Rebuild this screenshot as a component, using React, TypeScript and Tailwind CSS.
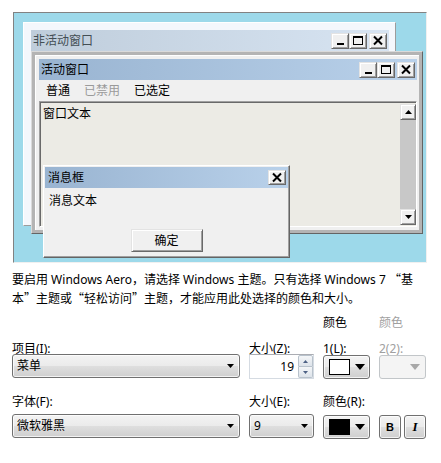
import React from 'react';

type Kind = 'min' | 'max' | 'close';

const aero =
  'rounded-[3px] border border-[#707070] bg-[linear-gradient(#f3f3f3_0%,#ebebeb_48%,#dedede_52%,#cfcfcf_100%)] shadow-[inset_0_0_0_1px_rgba(255,255,255,0.75)]';

const raised =
  'bg-[#f0f0f0] border border-t-[#e3e3e3] border-l-[#e3e3e3] border-r-[#696969] border-b-[#696969] shadow-[inset_1px_1px_0_#ffffff,inset_-1px_-1px_0_#a0a0a0]';

function CaptionGlyph({ kind }: { kind: Kind }) {
  if (kind === 'min')
    return (
      <svg width="12" height="11" viewBox="0 0 12 11">
        <rect x="3" y="8" width="7" height="2" fill="#000" />
      </svg>
    );
  if (kind === 'max')
    return (
      <svg width="12" height="11" viewBox="0 0 12 11">
        <rect x="1.5" y="1.5" width="9" height="8" fill="none" stroke="#000" />
        <rect x="1" y="1" width="10" height="2" fill="#000" />
      </svg>
    );
  return (
    <svg width="12" height="11" viewBox="0 0 12 11">
      <path d="M2 1.5 L10 9.5 M10 1.5 L2 9.5" stroke="#000" strokeWidth="2" />
    </svg>
  );
}

function CaptionButton({ kind, tall = 'h-[16px]' }: { kind: Kind; tall?: string }) {
  return (
    <div className={`w-[18px] ${tall} flex items-center justify-center ${raised}`}>
      <CaptionGlyph kind={kind} />
    </div>
  );
}

function TitleBar({ title, active }: { title: string; active: boolean }) {
  return (
    <div
      className={`h-[21px] flex items-center pl-[2px] pr-[2px] ${
        active
          ? 'bg-[linear-gradient(to_right,#99b4d1,#b9d1ea)] text-black'
          : 'bg-[linear-gradient(to_right,#bfcddb,#d7e4f2)] text-[#434e54]'
      }`}
    >
      <span className="flex-1 leading-[16px]">{title}</span>
      <CaptionButton kind="min" />
      <CaptionButton kind="max" />
      <div className="w-[2px]" />
      <CaptionButton kind="close" />
    </div>
  );
}

function ScrollArrow({ up }: { up?: boolean }) {
  return (
    <div className={`w-[16px] h-[16px] flex items-center justify-center ${raised}`}>
      <svg width="7" height="4" viewBox="0 0 7 4">
        <path d={up ? 'M0 4h7L3.5 0z' : 'M0 0h7L3.5 4z'} fill="#000" />
      </svg>
    </div>
  );
}

function DropArrow({ big, color = '#000' }: { big?: boolean; color?: string }) {
  return big ? (
    <svg width="10" height="6" viewBox="0 0 10 6">
      <path d="M0 0h10L5 6z" fill={color} />
    </svg>
  ) : (
    <svg width="7" height="4" viewBox="0 0 7 4">
      <path d="M0 0h7L3.5 4z" fill={color} />
    </svg>
  );
}

function Combo({ value, width }: { value: string; width: string }) {
  return (
    <div className={`${aero} ${width} h-[24px] flex items-center pl-[4px] pr-[5px]`}>
      <span className="flex-1 leading-[16px]">{value}</span>
      <DropArrow />
    </div>
  );
}

function ColorButton({ swatch }: { swatch: string }) {
  return (
    <div className={`${aero} w-[47px] h-[24px] flex items-center pl-[5px] pr-[4px]`}>
      <div className={`w-[21px] h-[16px] border border-black ${swatch}`} />
      <div className="flex-1" />
      <DropArrow big />
    </div>
  );
}

// full-width CJK quotes
const Q = ({ c }: { c: string }) => <span className="font-['Noto_Sans_CJK_SC',sans-serif]">{c}</span>;

export default function App() {
  return (
    <div className="w-[441px] h-[463px] overflow-hidden bg-white text-[12px] text-black font-['Noto_Sans','Noto_Sans_CJK_SC',sans-serif]">
      {/* preview */}
      <div className="relative ml-[13px] mt-[12px] w-[414px] h-[251px] border border-t-[#828282] border-l-[#828282] border-r-[#f0f0f0] border-b-[#f0f0f0] bg-[#9dd9ea]">
        {/* inactive window */}
        <div className="absolute left-[9px] top-[9px] w-[373px] h-[204px] border border-t-white border-l-white border-r-[#9c9c9c] border-b-[#9c9c9c] bg-[#f4f7fc] pt-[7px] pl-[7px] pr-[6px]">
          <TitleBar title="非活动窗口" active={false} />
        </div>

        {/* active window */}
        <div className="absolute left-[17px] top-[38px] w-[392px] h-[183px] flex border border-t-[#dadada] border-l-[#dadada] border-r-[#646464] border-b-[#646464] bg-[#b4b4b4] p-[3px]">
          <div className="flex-1 flex flex-col border-t border-l border-white bg-[#f0f0f0] pt-[3px] pl-[3px] pr-[2px] pb-[3px]">
            <TitleBar title="活动窗口" active />
            <div className="h-[21px] flex items-center bg-[#f0f0f0]">
              <span className="px-[7px] leading-[16px]">普通</span>
              <span className="px-[7px] leading-[16px] text-[#9a9a9a]">已禁用</span>
              <span className="px-[7px] leading-[16px]">已选定</span>
            </div>
            <div className="flex-1 flex border border-t-[#a0a0a0] border-l-[#a0a0a0] border-r-white border-b-white shadow-[inset_1px_1px_0_#696969] bg-[#ecebe5] pt-[1px] pl-[1px]">
              <div className="flex-1 pl-[2px] pt-[3px] leading-[16px]">窗口文本</div>
              <div className="w-[16px] flex flex-col bg-[#c8c8c8] mt-[1px] mb-[1px]">
                <ScrollArrow up />
                <div className="flex-1" />
                <ScrollArrow />
              </div>
            </div>
          </div>
        </div>

        {/* message box */}
        <div className="absolute left-[29px] top-[152px] w-[247px] h-[93px] flex flex-col border border-t-white border-l-white border-r-[#646464] border-b-[#646464] bg-[#f0f0f0] p-[1px] shadow-[inset_-1px_-1px_0_#a0a0a0]">
          <div className="h-[21px] flex items-center pl-[3px] pr-[2px] bg-[linear-gradient(to_right,#99b4d1,#b9d1ea)]">
            <span className="flex-1 leading-[16px]">消息框</span>
            <CaptionButton kind="close" tall="h-[15px]" />
          </div>
          <div className="pl-[4px] mt-[5px] leading-[16px]">消息文本</div>
          <div className="flex-1" />
          <div className="flex justify-center mb-[4px]">
            <div className={`w-[72px] h-[23px] flex items-center justify-center ${raised}`}>
              <span className="leading-[16px]">确定</span>
            </div>
          </div>
        </div>
      </div>

      {/* notice */}
      <p className="ml-[12px] mt-[7px] leading-[18px] whitespace-nowrap">
        要启用 Windows Aero，请选择 Windows 主题。只有选择 Windows 7 <Q c="“" />基
        <br />
        本<Q c="”" />主题或<Q c="“" />轻松访问<Q c="”" />主题，才能应用此处选择的颜色和大小。
      </p>

      {/* item row */}
      <div className="ml-[12px] flex gap-[9px] h-[46px] items-end">
        <div className="w-[228px] leading-[10px]">项目(I):</div>
        <div className="w-[65px] leading-[10px]">大小(Z):</div>
        <div className="w-[47px] flex flex-col">
          <div className="leading-[10px]">颜色</div>
          <div className="leading-[10px] mt-[16px]">1(L):</div>
        </div>
        <div className="w-[47px] flex flex-col text-[#a0a0a0]">
          <div className="leading-[10px]">颜色</div>
          <div className="leading-[10px] mt-[16px]">2(2):</div>
        </div>
      </div>
      <div className="ml-[12px] flex gap-[9px] h-[24px]">
        <Combo value="菜单" width="w-[228px]" />
        <div className="w-[65px] h-[25px] flex border border-[#d5dbe2] border-t-[#abadb3] bg-white">
          <div className="flex-1 text-right pr-[4px] leading-[23px]">19</div>
          <div className="w-[15px] flex flex-col">
            <div className="flex-1 flex items-center justify-center border border-[#b8c2cc] rounded-t-[2px] bg-[linear-gradient(#f4f6f8,#dde3ea)]">
              <svg width="5" height="3" viewBox="0 0 5 3">
                <path d="M0 3h5L2.5 0z" fill="#4d6185" />
              </svg>
            </div>
            <div className="flex-1 flex items-center justify-center border border-t-0 border-[#b8c2cc] rounded-b-[2px] bg-[linear-gradient(#f4f6f8,#dde3ea)]">
              <svg width="5" height="3" viewBox="0 0 5 3">
                <path d="M0 0h5L2.5 3z" fill="#4d6185" />
              </svg>
            </div>
          </div>
        </div>
        <div className="mt-[1px]">
          <ColorButton swatch="bg-white" />
        </div>
        <div className="mt-[1px] w-[47px] h-[24px] flex items-center justify-end pr-[5px] rounded-[3px] border border-[#c2c6c9] bg-[#f4f4f4]">
          <DropArrow big color="#a8a8a8" />
        </div>
      </div>

      {/* font row */}
      <div className="ml-[12px] flex gap-[9px] h-[29px] items-end">
        <div className="w-[228px] leading-[10px]">字体(F):</div>
        <div className="w-[65px] leading-[10px]">大小(E):</div>
        <div className="w-[103px] leading-[10px]">颜色(R):</div>
      </div>
      <div className="ml-[12px] mt-[7px] flex gap-[9px] h-[24px]">
        <Combo value="微软雅黑" width="w-[228px]" />
        <Combo value="9" width="w-[65px]" />
        <div className="mt-[1px]">
          <ColorButton swatch="bg-black" />
        </div>
        <div className="mt-[1px] flex gap-[3px]">
          <div className={`${aero} w-[22px] h-[24px] flex items-center justify-center`}>
            <span className="font-['Liberation_Sans',sans-serif] font-bold text-[11px] leading-[12px]">B</span>
          </div>
          <div className={`${aero} w-[22px] h-[24px] flex items-center justify-center`}>
            <span className="font-['Liberation_Serif',serif] font-bold italic text-[13px] leading-[12px]">I</span>
          </div>
        </div>
      </div>
    </div>
  );
}
